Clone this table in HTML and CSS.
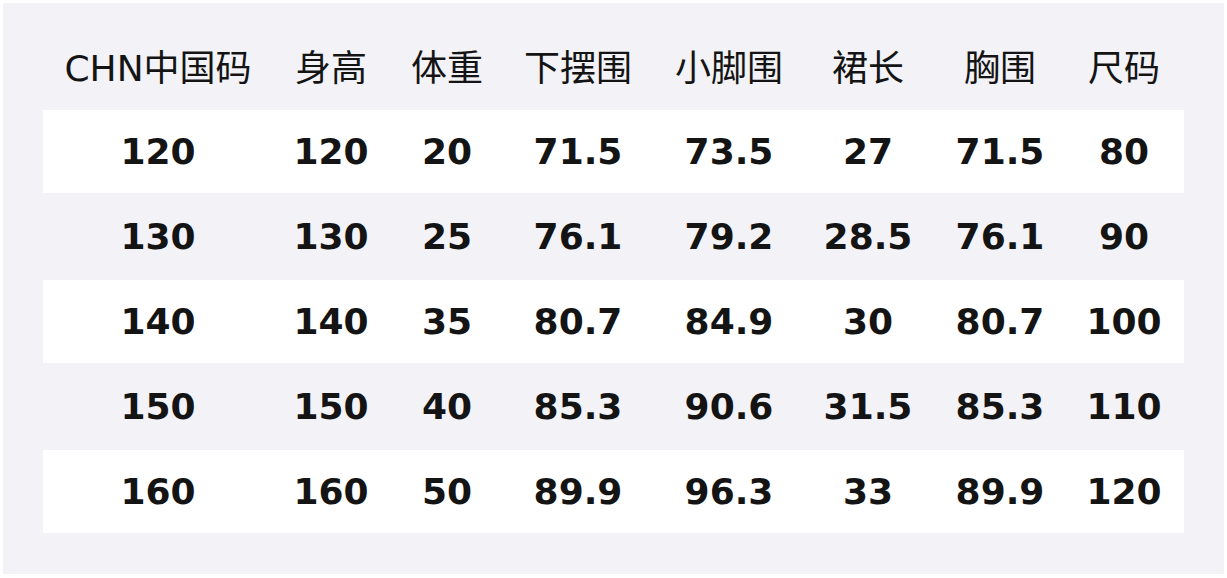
FILE: index.html
```html
<!DOCTYPE html>
<html lang="zh">
<head>
<meta charset="utf-8">
<link rel="stylesheet" href="styles.css">
</head>
<body>
<div class="panel">
  <div class="table">
    <div class="row head">
      <div>CHN中国码</div><div>身高</div><div>体重</div><div>下摆围</div><div>小脚围</div><div>裙长</div><div>胸围</div><div>尺码</div>
    </div>
    <div class="row light">
      <div>120</div><div>120</div><div>20</div><div>71.5</div><div>73.5</div><div>27</div><div>71.5</div><div>80</div>
    </div>
    <div class="row dark">
      <div>130</div><div>130</div><div>25</div><div>76.1</div><div>79.2</div><div>28.5</div><div>76.1</div><div>90</div>
    </div>
    <div class="row light">
      <div>140</div><div>140</div><div>35</div><div>80.7</div><div>84.9</div><div>30</div><div>80.7</div><div>100</div>
    </div>
    <div class="row dark">
      <div>150</div><div>150</div><div>40</div><div>85.3</div><div>90.6</div><div>31.5</div><div>85.3</div><div>110</div>
    </div>
    <div class="row light">
      <div>160</div><div>160</div><div>50</div><div>89.9</div><div>96.3</div><div>33</div><div>89.9</div><div>120</div>
    </div>
  </div>
</div>
</body>
</html>
```

FILE: styles.css
```css
html, body {
  margin: 0;
  padding: 0;
  background: #ffffff;
}
body {
  padding: 3px;
  width: 1221px;
  height: 572px;
  box-sizing: content-box;
}
.panel {
  background: #f2f2f7;
  width: 1221px;
  height: 571px;
  box-sizing: border-box;
  padding: 24px 40px 0 40px;
}
.table {
  display: flex;
  flex-direction: column;
  font-family: "DejaVu Sans", "Noto Sans CJK SC", sans-serif;
  color: #141414;
  font-size: 36px;
}
.row {
  display: grid;
  grid-template-columns: 230px 116px 116px 146px 156px 122px 142px 106px;
  align-items: center;
  justify-items: center;
  height: 83px;
  font-weight: bold;
}
.row > div {
  white-space: nowrap;
  line-height: 1;
}
.head {
  font-weight: normal;
  height: 83px;
}
.light {
  background: #ffffff;
}
.dark {
  height: 87px;
}
```
